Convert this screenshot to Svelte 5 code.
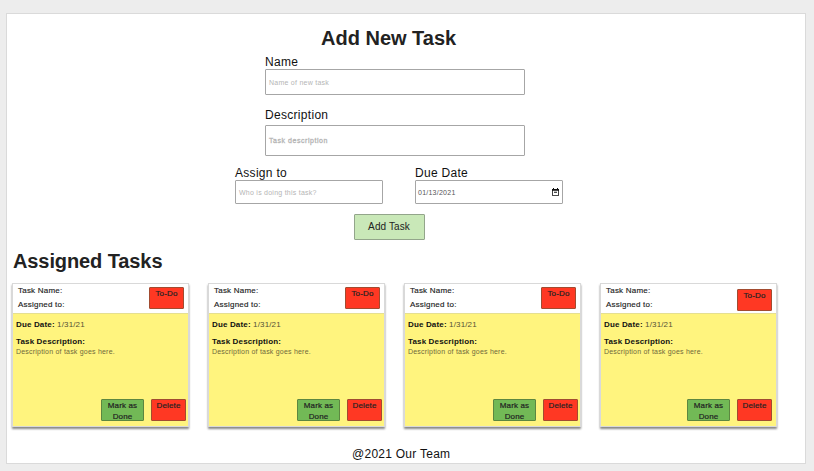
<script>
  const tasks = [
    { id: 1, due: '1/31/21' },
    { id: 2, due: '1/31/21' },
    { id: 3, due: '1/31/21' },
    { id: 4, due: '1/31/21' }
  ];
</script>

<main class="page">
  <h1>Add New Task</h1>
  <form>
    <div class="wide">
      <label for="name">Name</label>
      <div class="field name" id="name"><span class="ph">Name of new task</span></div>
      <label for="desc" class="desc-label">Description</label>
      <div class="field desc" id="desc"><span class="ph strong">Task description</span></div>
    </div>
    <div class="pair">
      <div class="col">
        <label for="who">Assign to</label>
        <div class="field small" id="who"><span class="ph who">Who is doing this task?</span></div>
      </div>
      <div class="col">
        <label for="due">Due Date</label>
        <div class="field small date-field" id="due">
          <span class="date">01/13/2021</span>
          <svg width="7" height="8" viewBox="0 0 7 8"><path d="M1 0h1v1h3V0h1v1h1v6.7H0V1h1zM.8 2.8v4.1h5.4V2.8zM2 3.8h3v1H2z" fill="#111" fill-rule="evenodd" /></svg>
        </div>
      </div>
    </div>
    <button type="button" class="add">Add Task</button>
  </form>

  <h2>Assigned Tasks</h2>
  <section class="cards">
    {#each tasks as task (task.id)}
      <article>
        <header>
          <div class="meta"><p>Task Name:</p><p>Assigned to:</p></div>
          <span class="btn red">To-Do</span>
        </header>
        <div class="body">
          <p class="due"><b>Due Date:</b> <span>{task.due}</span></p>
          <p class="title">Task Description:</p>
          <p class="text">Description of task goes here.</p>
          <div class="actions">
            <span class="btn green">Mark as<br />Done</span>
            <span class="btn red">Delete</span>
          </div>
        </div>
      </article>
    {/each}
  </section>
  <footer>@2021 Our Team</footer>
</main>

<style>
  :global(body) { background: #ededed; overflow: hidden; }
  * { box-sizing: border-box; margin: 0; padding: 0; }
  .page {
    width: 800px; height: 451px; margin: 13px 0 0 6px;
    background: #fff; border: 1px solid #dadada;
    font-family: "Liberation Sans", Arial, sans-serif; color: #222;
    display: flow-root;
  }
  h1, h2 { font-size: 20px; line-height: 24px; font-weight: 700; white-space: nowrap; }
  h1 { margin: 12px 0 0 314px; }
  form { display: flow-root; height: 199px; }
  .wide { width: 260px; margin: 4px 0 0 258px; }
  label { display: block; font-size: 12px; line-height: 15px; padding-top: 1px; height: 15px; letter-spacing: .3px; color: #111; }
  .field { border: 1px solid #a6a6a6; border-radius: 1px; display: flex; align-items: center; padding: 0 3px; background: #fff; }
  .name { height: 26px; padding-top: 1px; }
  .desc-label { margin-top: 12px; }
  .desc { height: 31px; margin-top: 3px; }
  .ph { font-size: 7px; color: #b5b5b5; letter-spacing: .25px; white-space: nowrap; }
  .strong { -webkit-text-stroke: .3px #b5b5b5; letter-spacing: .55px; }
  .pair { display: flex; gap: 32px; margin: 9px 0 0 228px; }
  .col { width: 148px; }
  .small { height: 24px; justify-content: space-between; }
  .date { font-size: 7px; color: #555; letter-spacing: .25px; }
  .date-field { padding-left: 2px; }
  .add {
    display: block; width: 71px; height: 26px; margin: 10px 0 0 346.5px;
    border: 1px solid #93a58b; border-radius: 1px; background: #c9e8b8;
    font: 10px/24px "Liberation Sans", Arial, sans-serif; letter-spacing: .1px; color: #222;
  }
  h2 { margin-left: 6px; letter-spacing: -.1px; }
  .cards { display: flex; gap: 19px; margin: 10px 0 0 5px; }
  article { width: 177px; height: 144px; border: 1px solid #d9d9d9; box-shadow: 0 2px 2px #888; }
  header { height: 29px; display: flex; justify-content: space-between; padding: 3px 4px 0 5px; background: #fff; }
  article:last-child header { padding: 5px 4px 0 5px; }
  article:last-child .meta { margin-top: -2px; }
  .meta p { font-size: 8px; line-height: 14px; margin-top: -3px; letter-spacing: .22px; color: #222; -webkit-text-stroke: .15px #222; }
  .meta p + p { margin-top: 0; }
  .body { height: 113px; padding: 4px 3px 0; background: #fff47e; display: flex; flex-direction: column; border-top: 1px solid #e5df91; }
  .due { font-size: 8px; line-height: 14px; letter-spacing: .15px; color: #111; }
  .due span { color: #555036; }
  .title { font-size: 8px; line-height: 12px; margin-top: 4px; font-weight: 700; letter-spacing: .15px; color: #111; }
  .text { font-size: 7px; line-height: 10px; margin-top: -1px; letter-spacing: .21px; color: #6f693c; white-space: nowrap; }
  .actions { margin-top: auto; display: flex; justify-content: flex-end; gap: 7px; padding-bottom: 5px; }
  article:last-child .actions { padding-right: 2px; }
  .btn { width: 35px; height: 22px; border: 1px solid #a24b30; border-radius: 1px; font-size: 8px; line-height: 11px; text-align: center; letter-spacing: .15px; color: #222; -webkit-text-stroke: .2px #222; white-space: nowrap; }
  .actions .btn.red { margin-right: -1px; }
  .red { background: #ff3823; }
  .green { width: 43px; background: #72b956; border-color: #5c8740; }
  footer { margin-top: 19px; padding-left: 345px; font-size: 12px; line-height: 16px; letter-spacing: .26px; color: #111; }
</style>
